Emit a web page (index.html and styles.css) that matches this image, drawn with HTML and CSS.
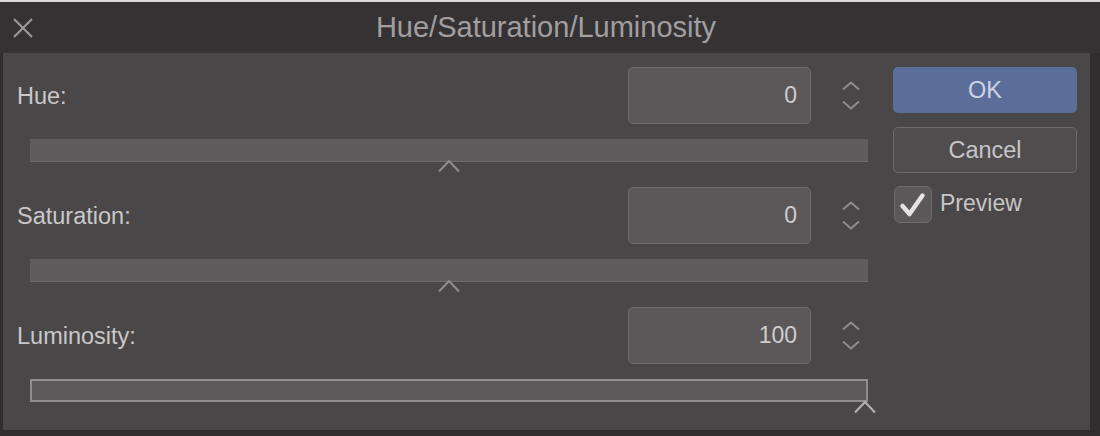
FILE: index.html
```html
<!DOCTYPE html>
<html>
<head>
<meta charset="utf-8">
<link rel="stylesheet" href="styles.css">
</head>
<body>
<div class="window">
  <div class="titlebar">
    <svg class="close" width="20" height="20" viewBox="0 0 20 20"><path d="M1 1 L19 19 M19 1 L1 19" stroke="#9c9a9b" stroke-width="2" fill="none"/></svg>
    <div class="title">Hue/Saturation/Luminosity</div>
  </div>
  <div class="body">
    <div class="params">
      <div class="group">
        <div class="head">
          <div class="label">Hue:</div>
          <div class="field">0</div>
          <svg class="spin" width="18" height="29" viewBox="0 0 18 29"><path d="M1 8.5 L9 1.5 L17 8.5 M1 20.5 L9 27.5 L17 20.5" stroke="#8e8c8d" stroke-width="1.8" fill="none"/></svg>
        </div>
        <div class="track">
          <svg class="thumb" style="left:50%" width="22" height="14" viewBox="0 0 22 14"><path d="M1 12.5 L11 2 L21 12.5" stroke="#8e8c8d" stroke-width="2" fill="none"/></svg>
        </div>
      </div>
      <div class="group">
        <div class="head">
          <div class="label">Saturation:</div>
          <div class="field">0</div>
          <svg class="spin" width="18" height="29" viewBox="0 0 18 29"><path d="M1 8.5 L9 1.5 L17 8.5 M1 20.5 L9 27.5 L17 20.5" stroke="#8e8c8d" stroke-width="1.8" fill="none"/></svg>
        </div>
        <div class="track">
          <svg class="thumb" style="left:50%" width="22" height="14" viewBox="0 0 22 14"><path d="M1 12.5 L11 2 L21 12.5" stroke="#8e8c8d" stroke-width="2" fill="none"/></svg>
        </div>
      </div>
      <div class="group">
        <div class="head">
          <div class="label">Luminosity:</div>
          <div class="field">100</div>
          <svg class="spin" width="18" height="29" viewBox="0 0 18 29"><path d="M1 8.5 L9 1.5 L17 8.5 M1 20.5 L9 27.5 L17 20.5" stroke="#8e8c8d" stroke-width="1.8" fill="none"/></svg>
        </div>
        <div class="track track-full">
          <svg class="thumb thumb-full" style="left:100%" width="22" height="14" viewBox="0 0 22 14"><path d="M1 12.5 L11 2 L21 12.5" stroke="#b4b2b3" stroke-width="2" fill="none"/></svg>
        </div>
      </div>
    </div>
    <div class="actions">
      <div class="btn btn-ok">OK</div>
      <div class="btn btn-cancel">Cancel</div>
      <div class="check-row">
        <div class="checkbox">
          <svg width="30" height="28" viewBox="0 0 30 28"><path d="M4.5 15 L11.5 23 L24.5 4.5" stroke="#e4e3e4" stroke-width="4.5" fill="none" stroke-linecap="round" stroke-linejoin="round"/></svg>
        </div>
        <div class="check-label">Preview</div>
      </div>
    </div>
  </div>
</div>
</body>
</html>
```

FILE: styles.css
```css
html, body {
  margin: 0;
  padding: 0;
  background: #d8d8d8;
}
body {
  width: 1100px;
  height: 436px;
  overflow: hidden;
  font-family: "Liberation Sans", Arial, sans-serif;
}
.window {
  margin-top: 2px;
  height: 434px;
  background: #2f2d2e;
  display: flex;
  flex-direction: column;
}
.titlebar {
  height: 51px;
  background: #343233;
  position: relative;
  display: flex;
  align-items: center;
  justify-content: center;
}
.close {
  position: absolute;
  left: 13px;
  top: 16px;
}
.title {
  color: #a19fa0;
  font-size: 29px;
  margin-left: -8px;
  margin-top: -1px;
}
.body {
  margin: 0 10px 0 3px;
  height: 377px;
  background: #494748;
  display: flex;
  padding-top: 14px;
  box-sizing: border-box;
}
.params {
  padding-left: 14px;
  width: 851px;
  display: flex;
  flex-direction: column;
  gap: 25px;
}
.group {
  display: flex;
  flex-direction: column;
  gap: 15px;
}
.head {
  height: 57px;
  display: flex;
  align-items: center;
}
.label {
  flex: 1;
  color: #cac8c9;
  font-size: 23.5px;
  margin-top: 2px;
}
.field {
  width: 183px;
  height: 57px;
  box-sizing: border-box;
  background: #5a5859;
  border: 1px solid #6d6b6c;
  border-radius: 5px;
  color: #cfcdce;
  font-size: 23px;
  display: flex;
  align-items: center;
  justify-content: flex-end;
  padding-right: 13px;
}
.spin {
  margin-left: 31px;
  margin-right: 8px;
}
.track {
  position: relative;
  margin-left: 13px;
  height: 23px;
  background: #5e5c5d;
  border-bottom: 1px solid #6c6a6b;
  box-sizing: border-box;
}
.track-full {
  border: 2px solid #8f8d8e;
  background: #5b595a;
}
.thumb {
  position: absolute;
  top: 20px;
  margin-left: -11px;
}
.thumb-full {
  top: 19px;
  margin-left: -12px;
}
.actions {
  margin-left: 25px;
  width: 184px;
  display: flex;
  flex-direction: column;
}
.btn {
  height: 46px;
  border-radius: 5px;
  box-sizing: border-box;
  display: flex;
  align-items: center;
  justify-content: center;
  font-size: 23.5px;
}
.btn-ok {
  background: #5a6e99;
  color: #ccd3e2;
}
.btn-cancel {
  margin-top: 14px;
  background: #4f4d4e;
  border: 1px solid #6c6a6b;
  color: #c7c5c6;
}
.check-row {
  margin-top: 13px;
  display: flex;
  align-items: center;
  margin-left: 1px;
}
.checkbox {
  width: 38px;
  height: 37px;
  box-sizing: border-box;
  border-radius: 6px;
  background: #5a5859;
  border: 1px solid #6e6c6d;
  display: flex;
  align-items: center;
  justify-content: center;
}
.check-label {
  margin-left: 8px;
  color: #c7c5c6;
  font-size: 23px;
  margin-top: -2px;
}
```
